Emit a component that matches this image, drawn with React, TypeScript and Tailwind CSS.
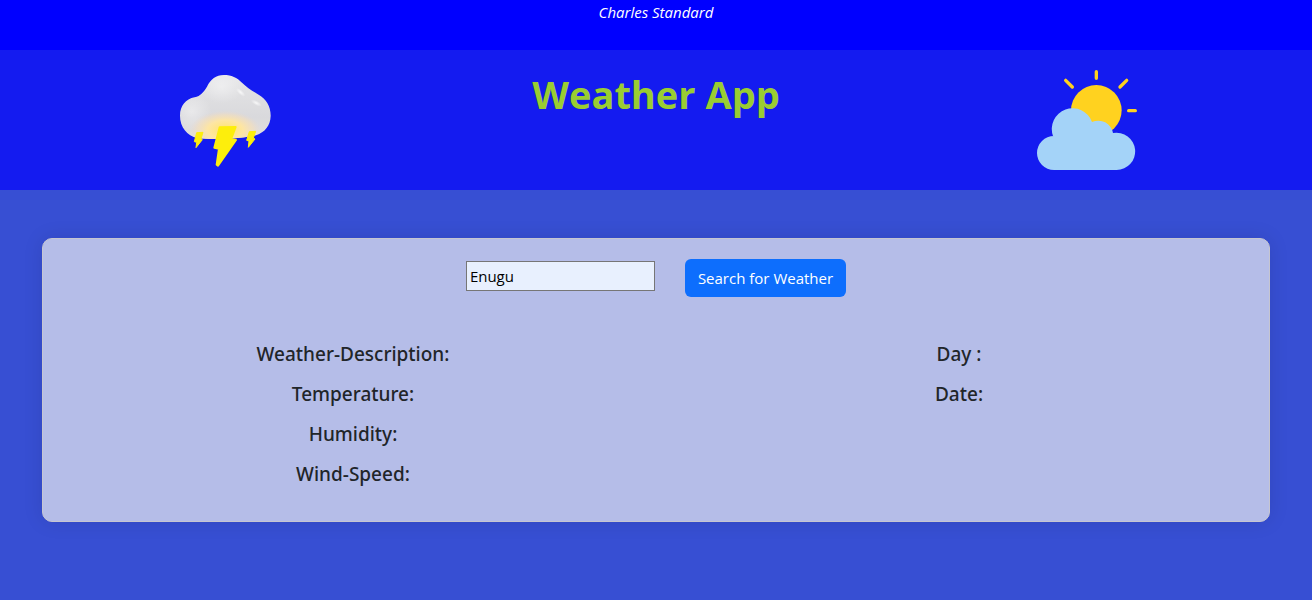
import { useState } from "react";

function StormIcon() {
  return (
    <svg viewBox="15 30 300 300" className="size-[100px]" role="img" aria-label="Thunderstorm">
      <defs>
        <linearGradient id="cloud" x1="0" y1="0" x2="0" y2="1">
          <stop offset="0" stopColor="#e9e9eb" />
          <stop offset="0.3" stopColor="#e0e0e2" />
          <stop offset="0.65" stopColor="#d9d9dc" />
          <stop offset="1" stopColor="#e4e0dc" />
        </linearGradient>
        <radialGradient id="glow" cx="0.5" cy="0.5" r="0.5">
          <stop offset="0" stopColor="#ffe56a" />
          <stop offset="0.5" stopColor="#ffe6a0" stopOpacity="0.95" />
          <stop offset="0.8" stopColor="#f8dfb4" stopOpacity="0.5" />
          <stop offset="1" stopColor="#ecd8c8" stopOpacity="0" />
        </radialGradient>
        <radialGradient id="shine" cx="0.5" cy="0.5" r="0.5">
          <stop offset="0" stopColor="#ffffff" />
          <stop offset="1" stopColor="#ffffff" stopOpacity="0" />
        </radialGradient>
        <clipPath id="cloudShape">
          <path d="M162 45C184 45 201 53 216 68C230 82 246 92 266 104C289 117 303 141 302 169C301 197 285 217 258 226C220 236 120 241 82 234C51 227 30 201 30 167C30 138 47 117 74 112C92 108 101 96 111 80C122 58 138 45 162 45Z" />
        </clipPath>
      </defs>
      <g clipPath="url(#cloudShape)">
        <rect x="20" y="35" width="290" height="210" fill="url(#cloud)" />
        <ellipse cx="65" cy="155" rx="60" ry="55" fill="url(#shine)" opacity="0.4" />
        <ellipse cx="155" cy="80" rx="65" ry="50" fill="url(#shine)" opacity="0.4" />
        <ellipse cx="166" cy="210" rx="106" ry="58" fill="url(#glow)" />
        <ellipse cx="212" cy="97" rx="18" ry="7" transform="rotate(42 212 97)" fill="url(#shine)" opacity="0.8" />
        <ellipse cx="259" cy="129" rx="18" ry="7" transform="rotate(28 259 129)" fill="url(#shine)" opacity="0.8" />
      </g>
      <g fill="#fdee0c" stroke="#fdee0c" strokeLinejoin="round">
        <path strokeWidth="6" d="M149 202L197 201L183 238L198 240L144 317L140 314L147 266L133 263Z" />
        <path strokeWidth="3" d="M80 218L99 217L93 236L97 239L78 263L80 247L73 245Z" />
        <path strokeWidth="3" d="M238 215L257 214L250 234L255 237L235 262L237 243L230 241Z" />
      </g>
    </svg>
  );
}

function SunCloudIcon() {
  return (
    <svg viewBox="51 30 300 300" className="size-[100px]" role="img" aria-label="Partly cloudy">
      <g stroke="#ffd21f" strokeWidth="10" strokeLinecap="round">
        <path d="M229 35V55M137 61L157 81M320 61L300 81M326 152H346" />
      </g>
      <circle cx="229" cy="151" r="76" fill="#ffd21f" />
      <path
        fill="#a4d3f8"
        d="M102 330A51 51 0 0 1 102 228H99A60 60 0 1 1 216 186A45 45 0 0 1 279 219A56 56 0 1 1 290 330Z"
      />
    </svg>
  );
}

const conditions = ["Weather-Description:", "Temperature:", "Humidity:", "Wind-Speed:"];
const dates = ["Day :", "Date:"];

function Labels({ items }: { items: string[] }) {
  return (
    <div className="flex flex-1 flex-col items-center gap-4">
      {items.map((item) => (
        <h2 key={item} className="font-['Segoe_UI','Noto_Sans',sans-serif] text-[19px] leading-6 font-medium">
          {item}
        </h2>
      ))}
    </div>
  );
}

export default function App() {
  const [city, setCity] = useState("Enugu");

  return (
    <div className="min-h-screen bg-[#374fd3] font-['Segoe_UI','Open_Sans',sans-serif] text-base text-[#212529]">
      <header className="h-[50px] bg-[#0000ff] text-center text-[15px] leading-6 text-white italic">
        Charles Standard
      </header>
      <div className="grid grid-cols-3 justify-items-center bg-[#141bf0] px-[10px] py-5">
        <StormIcon />
        <h1 className="text-[38px] leading-12 font-bold whitespace-nowrap text-[#9acd32]">Weather App</h1>
        <SunCloudIcon />
      </div>
      <main className="px-[42px] py-12">
        <section className="rounded-[10px] border border-[#c6c6d0] bg-[#b5bde8] px-[7px] pt-5 pb-[35px] shadow-[0_0_20px_rgba(0,0,0,0.1)]">
          <form className="flex items-center justify-center gap-[30px]" onSubmit={(event) => event.preventDefault()}>
            <input
              type="text"
              aria-label="City"
              value={city}
              onChange={(event) => setCity(event.target.value)}
              className="mb-1 h-[30px] w-[189px] border border-[#767676] bg-[#e8f0fe] px-[3px] text-[15px] text-black"
            />
            <button type="submit" className="h-[38px] rounded-md bg-[#0d6efd] px-[13px] text-[15px] text-white">
              Search for Weather
            </button>
          </form>
          <div className="mt-[45px] flex">
            <Labels items={conditions} />
            <Labels items={dates} />
          </div>
        </section>
      </main>
    </div>
  );
}
